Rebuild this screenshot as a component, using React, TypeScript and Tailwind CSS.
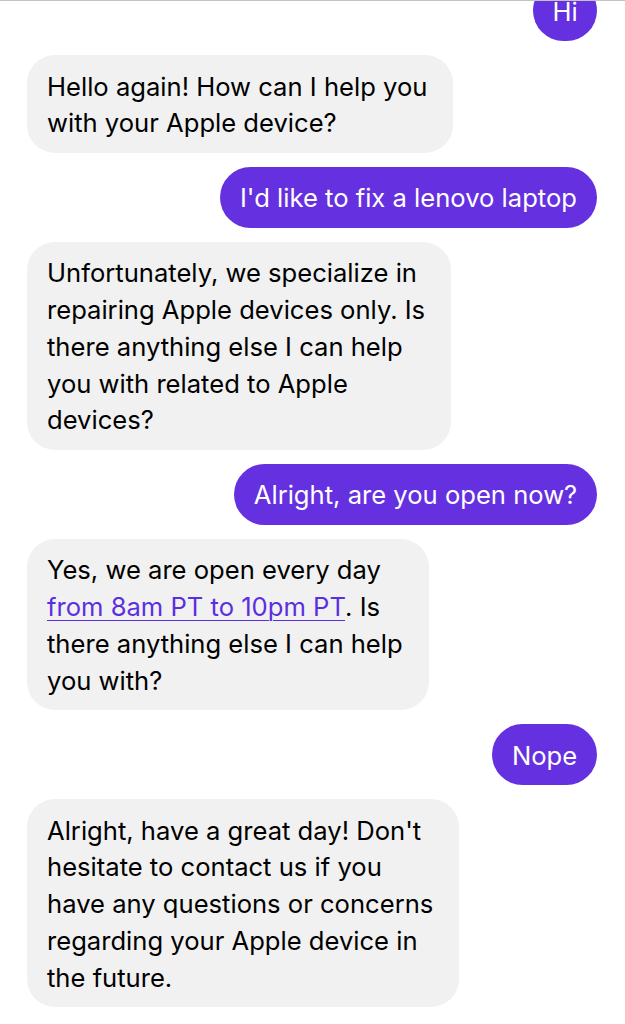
import React from "react";

type Msg = { from: "me" | "bot"; w: number; lines: React.ReactNode[] };

const msgs: Msg[] = [
  { from: "me", w: 64, lines: ["Hi"] },
  { from: "bot", w: 426, lines: ["Hello again! How can I help you", "with your Apple device?"] },
  { from: "me", w: 377, lines: ["I'd like to fix a lenovo laptop"] },
  {
    from: "bot",
    w: 424,
    lines: [
      "Unfortunately, we specialize in",
      "repairing Apple devices only. Is",
      "there anything else I can help",
      "you with related to Apple",
      "devices?",
    ],
  },
  { from: "me", w: 363, lines: ["Alright, are you open now?"] },
  {
    from: "bot",
    w: 402,
    lines: [
      "Yes, we are open every day",
      <>
        <span className="text-[#5b2fe0] underline decoration-1 underline-offset-[4px]">from 8am PT to 10pm PT</span>. Is
      </>,
      "there anything else I can help",
      "you with?",
    ],
  },
  { from: "me", w: 105, lines: ["Nope"] },
  {
    from: "bot",
    w: 432,
    lines: [
      "Alright, have a great day! Don't",
      "hesitate to contact us if you",
      "have any questions or concerns",
      "regarding your Apple device in",
      "the future.",
    ],
  },
];

export default function App() {
  return (
    <div
      className="w-[625px] h-[1024px] overflow-hidden bg-white border-t border-[#c4c4c4]"
      style={{ fontFamily: "Inter, 'Noto Sans', sans-serif" }}
    >
      <div className="flex flex-col gap-[13.75px] mt-[-21px] pr-[28px] pl-[27px]">
        {msgs.map((m, i) => (
          <div key={i} className={m.from === "me" ? "flex justify-end" : "flex justify-start"}>
            <div
              className={
                (m.from === "me"
                  ? "bg-[#6530e0] text-white rounded-[31px] text-center "
                  : "bg-[#f1f1f1] text-black rounded-[28px] pl-[20px] ") +
                "pt-[13.5px] pb-[11px] text-[25.6px] leading-[36.75px] whitespace-nowrap"
              }
              style={{ width: m.w }}
            >
              {m.lines.map((l, j) => (
                <div key={j}>{l}</div>
              ))}
            </div>
          </div>
        ))}
      </div>
    </div>
  );
}
